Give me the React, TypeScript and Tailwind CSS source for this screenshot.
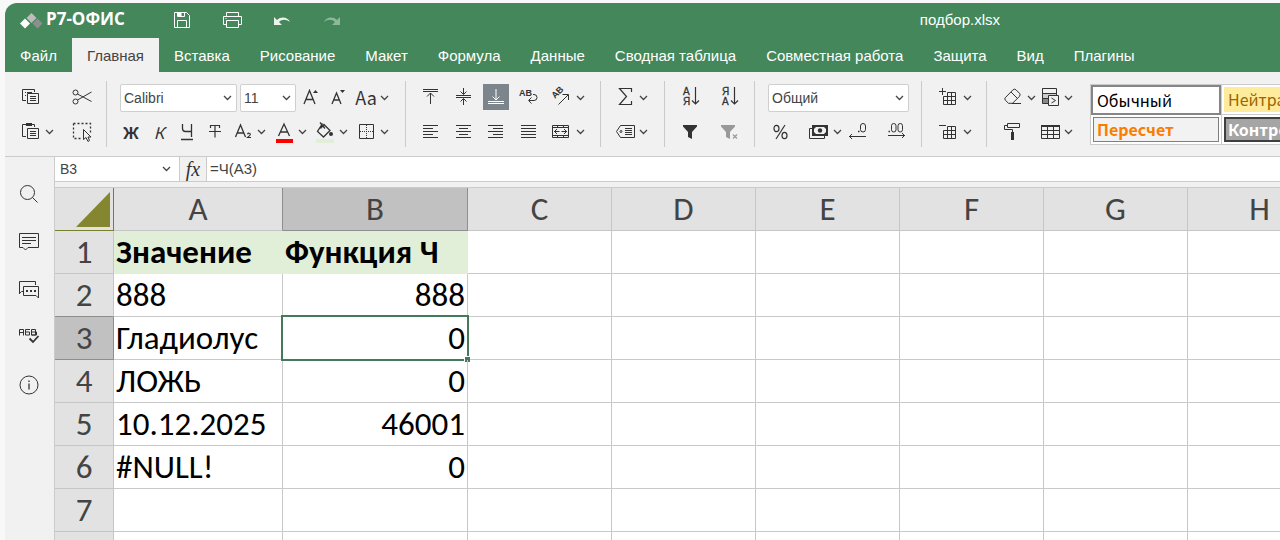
import type { ReactNode } from 'react';

const tabs = [
    'Файл',
    'Главная',
    'Вставка',
    'Рисование',
    'Макет',
    'Формула',
    'Данные',
    'Сводная таблица',
    'Совместная работа',
    'Защита',
    'Вид',
    'Плагины',
];

const columns = ['A', 'B', 'C', 'D', 'E', 'F', 'G', 'H'];

const rows = [
    ['Значение', 'Функция Ч'],
    ['888', '888'],
    ['Гладиолус', '0'],
    ['ЛОЖЬ', '0'],
    ['10.12.2025', '46001'],
    ['#NULL!', '0'],
    ['', ''],
    ['', ''],
];

function Icon({ children, size = 20 }: { children: ReactNode; size?: number }) {
    return (
        <svg
            width={size}
            height={size}
            viewBox={`0 0 ${size} ${size}`}
            fill="none"
            stroke="currentColor"
            className="shrink-0 overflow-visible"
            aria-hidden="true"
        >
            {children}
        </svg>
    );
}

function Chevron() {
    return (
        <svg width="9" height="6" viewBox="0 0 9 6" fill="none" stroke="#444" strokeWidth="1.3" className="shrink-0" aria-hidden="true">
            <path d="M1 1l3.5 3.5L8 1" />
        </svg>
    );
}

function Tool({ label, children }: { label: string; children: ReactNode }) {
    return (
        <button type="button" aria-label={label} className="flex h-7 w-7 shrink-0 items-center justify-center">
            {children}
        </button>
    );
}

function Caret({ label, tight }: { label: string; tight?: boolean }) {
    return (
        <button
            type="button"
            aria-label={label}
            className={tight ? 'flex h-7 w-[9px] shrink-0 items-center' : 'flex h-7 w-[13px] shrink-0 items-center'}
        >
            <Chevron />
        </button>
    );
}

function Select({ label, value, width }: { label: string; value: string; width: string }) {
    return (
        <div className={`grid h-7 shrink-0 items-center rounded-xs border border-[#cfcfcf] bg-white ${width}`}>
            <select aria-label={label} className="col-start-1 row-start-1 w-full appearance-none bg-transparent pl-[3px] text-[14px] text-[#444]">
                <option>{value}</option>
            </select>
            <span className="pointer-events-none col-start-1 row-start-1 justify-self-end pr-1">
                <Chevron />
            </span>
        </div>
    );
}

function Group({ className, children }: { className: string; children: ReactNode }) {
    return (
        <div className={`flex shrink-0 flex-col gap-[6px] border-r border-[#cbcbcb] pt-[3px] ${className}`}>{children}</div>
    );
}

function TitleBar() {
    return (
        <div className="flex h-[35px] items-center text-white">
            <div className="flex w-[163px] items-center gap-[3px] pl-[15px]">
                <svg width="23" height="16" viewBox="0 0 23 16" aria-hidden="true">
                    <path d="M11.500 0l5 5-5 5-5-5z" fill="#bdbdbd" />
                    <path d="M5 5.500l5 5-5 5-5-5z" fill="#fff" />
                    <path d="M17.500 5.500l5 5-5 5-5-5z" fill="#8e8e8e" />
                </svg>
                <span className="pb-1 font-['Open_Sans',sans-serif] text-[17px] font-bold">Р7-ОФИС</span>
            </div>
            <div className="flex gap-[22px]">
                <Tool label="Сохранить">
                    <Icon>
                        <path d="M2.500 1.500h12l3 3v12h-15z" />
                        <path d="M5.500 1.500v4h7v-4M5.500 16.500v-7h9v7" />
                        <path d="M6 2h3v3H6z" fill="currentColor" />
                    </Icon>
                </Tool>
                <Tool label="Печать">
                    <Icon>
                        <path d="M4.500 5.500v-4h12v4M4.500 13.500h-3v-8h18v8h-3M4.500 9.500h12v7h-12z" />
                        <path d="M3.500 7.500h1" />
                    </Icon>
                </Tool>
                <Tool label="Отменить">
                    <Icon>
                        <path d="M2 6v8h8l-3-3c3-3 7-3 11 0-2-5-9-6-13-2z" fill="currentColor" stroke="none" opacity=".9" />
                    </Icon>
                </Tool>
                <Tool label="Повторить">
                    <Icon>
                        <path d="M18 6v8h-8l3-3c-3-3-7-3-11 0 2-5 9-6 13-2z" fill="currentColor" stroke="none" opacity=".4" />
                    </Icon>
                </Tool>
            </div>
            <span className="mr-[280px] ml-auto text-[15px]">подбор.xlsx</span>
        </div>
    );
}

function ClipboardGroup() {
    return (
        <Group className="w-[102px] pl-3">
            <div className="flex gap-[23px]">
                <Tool label="Копировать">
                    <Icon>
                        <path d="M5 12.500H1.500v-11h12V4M4 4.500h1M4 7.500h1M6 4.500h5" />
                        <path d="M6.500 5.500h11v10h-11zM9 8.500h6M9 10.500h6M9 12.500h6" />
                    </Icon>
                </Tool>
                <Tool label="Вырезать">
                    <Icon>
                        <circle cx="3.500" cy="4.500" r="2.500" />
                        <circle cx="3.500" cy="13.500" r="2.500" />
                        <path d="M5.500 6l14 7.500M5.500 12L19.500 4" />
                    </Icon>
                </Tool>
            </div>
            <div className="flex">
                <Tool label="Вставить">
                    <Icon>
                        <path d="M5 14.500H1.500v-12h12V5" />
                        <path d="M5 1h6v3H5z" fill="currentColor" stroke="none" />
                        <path d="M6.500 6.500h11v10h-11zM9 9.500h6M9 11.500h6M9 13.500h6" />
                    </Icon>
                </Tool>
                <Caret label="Параметры вставки" />
                <div className="w-[10px]" />
                <Tool label="Выделить всё">
                    <Icon>
                        <path d="M1.500 1.500h17v9M1.500 1.500v15h9" strokeDasharray="2 2" strokeWidth="1.3" />
                        <path d="M11.500 7.500v10l2.500-2 2 4 1.500-1-1.500-3.500h3z" fill="#f1f1f1" />
                    </Icon>
                </Tool>
            </div>
        </Group>
    );
}

function FontGroup() {
    return (
        <Group className="w-[299px]">
            <div className="flex pl-[13px]">
                <Select label="Шрифт" value="Calibri" width="w-[117px]" />
                <div className="w-[3px]" />
                <Select label="Размер шрифта" value="11" width="w-14" />
                <Tool label="Увеличить размер шрифта">
                    <Icon>
                        <path d="M4 16L9.500 2.500 15 16M6 11.500h7" strokeWidth="1.3" />
                        <path d="M13 5l2.500-3L18 5z" fill="currentColor" stroke="none" />
                    </Icon>
                </Tool>
                <Tool label="Уменьшить размер шрифта">
                    <Icon>
                        <path d="M4 16L8.500 5 13 16M5.500 12h6" strokeWidth="1.3" />
                        <path d="M12 2l2.500 3L17 2z" fill="currentColor" stroke="none" />
                    </Icon>
                </Tool>
                <Tool label="Изменить регистр">
                    <span className="pb-px font-['Noto_Sans_CJK_SC',sans-serif] text-[18px]">Aa</span>
                </Tool>
                <Caret label="Варианты регистра" />
            </div>
            <div className="flex pl-[10px] font-['Noto_Sans_CJK_SC',sans-serif] text-[16px]">
                <Tool label="Полужирный">
                    <b>Ж</b>
                </Tool>
                <Tool label="Курсив">
                    <i>К</i>
                </Tool>
                <Tool label="Подчёркнутый">
                    <Icon>
                        <path d="M5.500 2v4.500q0 3 3 3h6M14.500 2v13M4 17.500h12" strokeWidth="1.3" />
                    </Icon>
                </Tool>
                <Tool label="Зачёркнутый">
                    <Icon>
                        <path d="M5.500 6V3.500h9V6M10 3.500v12M4 9.500h12" strokeWidth="1.200" />
                    </Icon>
                </Tool>
                <Tool label="Подстрочные знаки">
                    <Icon>
                        <path d="M2.500 15L7.500 3l5 12M4.500 11h6.500" strokeWidth="1.3" />
                        <path d="M14.500 12.200c.5-1.500 3-1.200 2.800.3-.2 1-1.800 2-2.800 3h3.500" strokeWidth="1.200" />
                    </Icon>
                </Tool>
                <Caret label="Варианты индексов" />
                <Tool label="Цвет шрифта">
                    <Icon>
                        <path d="M4.500 14L10 2l5.500 12M6.500 10h7" strokeWidth="1.3" />
                        <path d="M2 17h17v4H2z" fill="#f00" stroke="none" />
                    </Icon>
                </Tool>
                <Caret label="Выбрать цвет шрифта" />
                <Tool label="Цвет заливки">
                    <Icon>
                        <path d="M7.500 1.500l-5 8 6 5.500 6.500-6.500-6-6-3.500 4M5 .5l5 6" strokeWidth="1.3" />
                        <circle cx="16" cy="12" r="2" fill="currentColor" stroke="none" />
                        <path d="M1 17h18v4H1z" fill="#e1efd8" stroke="none" />
                    </Icon>
                </Tool>
                <Caret label="Выбрать цвет заливки" />
                <Tool label="Границы">
                    <Icon>
                        <path d="M3.500 2.500h14v14h-14z" />
                        <path d="M10.500 3v13M4 9.500h13" strokeDasharray="1 1" />
                    </Icon>
                </Tool>
                <Caret label="Выбрать границы" />
            </div>
        </Group>
    );
}

function AlignGroup() {
    return (
        <Group className="w-[195px] pl-[10px]">
            <div className="flex gap-[5px]">
                <Tool label="По верхнему краю">
                    <Icon>
                        <path d="M3 1.500h15M3 3.500h15M10.500 16V5M7 8.500L10.500 5 14 8.500" />
                    </Icon>
                </Tool>
                <Tool label="По середине">
                    <Icon>
                        <path d="M3 7.500h15M3 9.500h15M10.500 0v6M7.500 3.500l3 3 3-3M10.500 17v-6M7.500 13.500l3-3 3 3" />
                    </Icon>
                </Tool>
                <button
                    type="button"
                    aria-label="По нижнему краю"
                    aria-pressed="true"
                    className="mx-px flex h-[26px] w-[26px] items-center justify-center bg-[#7d858c] text-white"
                >
                    <Icon>
                        <path d="M2 14.500h16M2 16.500h16M10 2v11M6.500 9.500L10 13l3.500-3.500" />
                    </Icon>
                </button>
                <Tool label="Перенос текста">
                    <Icon>
                        <path d="M10 12.500h5a3 3 0 0 0 0-6h-1M12.500 9.500l-3 3 3 3" />
                        <text x="0" y="8" fontSize="9" fontWeight="700" fill="currentColor" stroke="none">
                            AB
                        </text>
                    </Icon>
                </Tool>
                <div className="flex">
                    <Tool label="Ориентация">
                        <Icon>
                            <path d="M6.500 16.500L16 7M10.500 6.500H16.500V12" />
                            <text fontSize="9" fontWeight="700" fill="currentColor" stroke="none" transform="translate(3 11) rotate(-45)">
                                AB
                            </text>
                        </Icon>
                    </Tool>
                    <Caret label="Варианты ориентации" />
                </div>
            </div>
            <div className="flex gap-[5px]">
                <Tool label="По левому краю">
                    <Icon>
                        <path d="M3 3.500h15M3 6.500h10M3 9.500h15M3 12.500h10M3 15.500h15" />
                    </Icon>
                </Tool>
                <Tool label="По центру">
                    <Icon>
                        <path d="M3 3.500h15M6 6.500h9M3 9.500h15M6 12.500h9M3 15.500h15" />
                    </Icon>
                </Tool>
                <Tool label="По правому краю">
                    <Icon>
                        <path d="M2 3.500h15M7 6.500h10M2 9.500h15M7 12.500h10M2 15.500h15" />
                    </Icon>
                </Tool>
                <Tool label="По ширине">
                    <Icon>
                        <path d="M2 3.500h15M2 6.500h15M2 9.500h15M2 12.500h15M2 15.500h15" />
                    </Icon>
                </Tool>
                <div className="flex">
                    <Tool label="Объединить ячейки">
                        <Icon>
                            <path d="M.5 3.500h16v12H.5zM1 5.500h15M1 13.500h15M5.500 4v1M11.500 4v1M5.500 14v1M11.500 14v1" />
                            <path d="M2 9.500h5.500M5 7l-2.500 2.500L5 12M15 9.500H9.500M12 7l2.500 2.500L12 12" />
                        </Icon>
                    </Tool>
                    <Caret label="Варианты объединения" />
                </div>
            </div>
        </Group>
    );
}

function FormulaGroup() {
    return (
        <Group className="w-16 pl-[10px]">
            <div className="flex">
                <Tool label="Сумма">
                    <Icon>
                        <path d="M16.500 4V.5h-12l7 8-7 8h12V13" strokeWidth="1.200" />
                    </Icon>
                </Tool>
                <Caret label="Другие функции" />
            </div>
            <div className="flex">
                <Tool label="Именованные диапазоны">
                    <Icon>
                        <path d="M5.500 3.500h14v12h-14L1.500 9.500z" />
                        <path d="M10 6.500h7M10 8.500h7M10 10.500h7M10 12.500h7" />
                        <circle cx="6" cy="9.500" r="1" />
                    </Icon>
                </Tool>
                <Caret label="Диспетчер имён" />
            </div>
        </Group>
    );
}

function SortGroup() {
    return (
        <Group className="w-[90px] pl-[11px]">
            <div className="flex gap-3">
                <Tool label="Сортировка по возрастанию">
                    <Icon>
                        <text x="3" y="7" fontSize="10" fill="currentColor" strokeWidth=".3">А</text>
                        <text x="3" y="17" fontSize="10" fill="currentColor" strokeWidth=".3">Я</text>
                        <path d="M15.500-1v17M12 12.500l3.500 3.500 3.500-3.500" strokeWidth="1.200" />
                    </Icon>
                </Tool>
                <Tool label="Сортировка по убыванию">
                    <Icon>
                        <text x="2" y="7" fontSize="10" fill="currentColor" strokeWidth=".3">Я</text>
                        <text x="2" y="17" fontSize="10" fill="currentColor" strokeWidth=".3">А</text>
                        <path d="M14.500-1v17M11 12.500l3.500 3.500 3.500-3.500" strokeWidth="1.200" />
                    </Icon>
                </Tool>
            </div>
            <div className="flex gap-3">
                <Tool label="Фильтр">
                    <Icon>
                        <path d="M3 3h14v1.500l-5 5.500v7l-4-2v-5L3 4.500z" fill="currentColor" stroke="none" />
                    </Icon>
                </Tool>
                <Tool label="Очистить фильтр">
                    <Icon>
                        <path d="M1 3h14v1.500L10 10v7l-4-2v-5L1 4.500z" fill="#999" stroke="none" />
                        <path d="M13 12.500l4 4M17 12.500l-4 4" stroke="#999" strokeWidth="1.200" />
                    </Icon>
                </Tool>
            </div>
        </Group>
    );
}

function NumberGroup() {
    return (
        <Group className="w-[167px]">
            <div className="flex pl-[13px]">
                <Select label="Числовой формат" value="Общий" width="w-[141px]" />
            </div>
            <div className="flex pl-[11px]">
                <Tool label="Процентный формат">
                    <Icon>
                        <ellipse cx="6.500" cy="6.500" rx="2.500" ry="3.200" strokeWidth="1.200" />
                        <ellipse cx="14.500" cy="13.500" rx="2.500" ry="3.200" strokeWidth="1.200" />
                        <path d="M15 3L6 17" strokeWidth="1.200" />
                    </Icon>
                </Tool>
                <div className="w-[11px]" />
                <Tool label="Финансовый формат">
                    <Icon>
                        <path d="M3.500 3.500h15v10h-15zM3 6.500H.5v10h15V14" />
                        <path
                            d="M3 3h16v11H3zM7 5L5 7v3l2 2h8l2-2V7l-2-2z"
                            fill="currentColor"
                            fillRule="evenodd"
                            stroke="none"
                        />
                        <circle cx="11" cy="8.500" r="2.200" fill="currentColor" stroke="none" />
                    </Icon>
                </Tool>
                <Caret label="Выбрать валюту" />
                <button type="button" aria-label="Уменьшить разрядность" className="flex h-7 w-6 items-center justify-center">
                    <Icon>
                        <path d="M1 14.500h17M4 12l-2.500 2.500L4 17" />
                        <path d="M10 9.500h1.500" strokeWidth="1.500" />
                        <rect x="12.500" y="1.500" width="5" height="8.500" rx="2.500" />
                    </Icon>
                </button>
                <div className="w-3" />
                <Tool label="Увеличить разрядность">
                    <Icon>
                        <path d="M2 13.500h17M16 11l2.500 2.500L16 16" />
                        <path d="M2.500 9.500H4" strokeWidth="1.500" />
                        <rect x="5.500" y="1.500" width="4.500" height="8.500" rx="2.200" />
                        <rect x="12" y="1.500" width="4.500" height="8.500" rx="2.200" />
                    </Icon>
                </Tool>
            </div>
        </Group>
    );
}

function CellsGroup() {
    return (
        <Group className="w-[65px] pl-[13px]">
            <div className="flex">
                <Tool label="Вставить ячейки">
                    <Icon>
                        <path d="M8.500 4.500h8v12h-12v-8h12M4.500 12.500h12M8.500 4.500v12M12.500 4.500v12M0 3.500h7M3.500 0v7" />
                    </Icon>
                </Tool>
                <Caret label="Варианты вставки ячеек" />
            </div>
            <div className="flex">
                <Tool label="Удалить ячейки">
                    <Icon>
                        <path d="M8.500 4.500h8v12h-12v-8h12M4.500 12.500h12M8.500 4.500v12M12.500 4.500v12M0 3.500h7" />
                    </Icon>
                </Tool>
                <Caret label="Варианты удаления ячеек" />
            </div>
        </Group>
    );
}

function EditGroup() {
    return (
        <div className="flex shrink-0 flex-col gap-[6px] pt-[3px] pl-3">
            <div className="flex">
                <Tool label="Очистить">
                    <Icon>
                        <path d="M2.200 9.800L10 1.800q1.500-1.300 3 0l3.500 3.500q1.300 1.500 0 3l-7 7H5.500l-3.300-3.300q-.8-1 0-2.200zM8 4l6.500 6.500M9 15.500h9" />
                    </Icon>
                </Tool>
                <Caret label="Варианты очистки" tight />
                <Tool label="Условное форматирование">
                    <Icon>
                        <path d="M2.500 5.500h14v5h-14z" fill="#ccc" stroke="none" />
                        <path d="M2.500 10.500h7v5h-7z" fill="#888" stroke="none" />
                        <path d="M2.500.5h14v5h-14zM2.500.5v15h7M2.500 10.500h7M16.500 5v3" />
                        <path d="M8.500 7.500h10v10h-10z" fill="#f1f1f1" />
                        <path d="M11.500 10l4 2.500-4 2.500" />
                    </Icon>
                </Tool>
                <Caret label="Правила форматирования" />
            </div>
            <div className="flex">
                <Tool label="Копировать стиль">
                    <Icon>
                        <path d="M4.500 1.500h12v4h-12zM4.500 3.500h-3v4h8V10" />
                        <path d="M8 10h3v8H8z" fill="currentColor" stroke="none" />
                    </Icon>
                </Tool>
                <div className="w-[9px]" />
                <Tool label="Форматировать как таблицу">
                    <Icon>
                        <path d="M1.500 4.500h18v12h-18zM1 8.500h18M1 12.500h18M7.500 4v12M13.500 4v12" />
                        <path d="M1 3h19v2H1z" fill="currentColor" stroke="none" />
                    </Icon>
                </Tool>
                <Caret label="Шаблоны таблиц" />
            </div>
        </div>
    );
}

function CellStyles() {
    return (
        <div className="mt-[3px] ml-[13px] grid h-[61px] shrink-0 grid-cols-[130px_131px] grid-rows-2 border-t border-l border-[#cbcbcb] bg-white text-left font-['Noto_Sans_CJK_SC',sans-serif] text-[16px]">
            <button type="button" className="flex items-center border-2 border-[#858585] px-1 pb-px text-black">
                Обычный
            </button>
            <div className="border-b border-l border-[#cbcbcb] p-[2px]">
                <button type="button" className="flex h-full w-full items-center bg-[#ffeb9c] px-1 pb-px text-[#9c6500]">
                    Нейтральный
                </button>
            </div>
            <div className="border-b border-[#cbcbcb] p-[2px]">
                <button type="button" className="flex h-full w-full items-center border border-[#7f7f7f] bg-[#f2f2f2] px-[3px] pb-px font-bold text-[#fa7d00]">
                    Пересчет
                </button>
            </div>
            <div className="border-b border-l border-[#cbcbcb] p-[2px]">
                <button type="button" className="flex h-full w-full items-center border-2 border-[#3f3f3f] bg-[#a5a5a5] px-[2px] pb-px font-bold text-white">
                    Контрольная
                </button>
            </div>
        </div>
    );
}

function Sidebar() {
    return (
        <nav className="flex w-[49px] shrink-0 flex-col items-center gap-5 pt-[23px] pr-px text-[#333]">
            <Tool label="Поиск">
                <Icon>
                    <circle cx="8.500" cy="8.500" r="7" />
                    <path d="M13.500 13.500l5 5" />
                </Icon>
            </Tool>
            <Tool label="Комментарии">
                <Icon>
                    <path d="M.5 1.500h19v14H9L6.500 18 4 15.500H.5zM3 5.500h14M3 8.500h14M3 11.500h9" />
                </Icon>
            </Tool>
            <Tool label="Чат">
                <Icon>
                    <path d="M.5 14V1.500h16V5M.5 13.500l2-2H4" />
                    <path d="M4.500 6.500h15V18L17 15.500H4.500z" />
                    <path d="M7 10h2v2H7zM11 10h2v2h-2zM15 10h2v2h-2z" fill="currentColor" stroke="none" />
                </Icon>
            </Tool>
            <Tool label="Проверка орфографии">
                <Icon>
                    <path d="M.5 7.500V1.500h4v6M.5 4.500h4M11 1.500H6.500v5.500h4v-3h-4M12.500 1.500h4v5.500h-4zM12.500 4h5v3h-5" />
                    <path d="M10.500 10.500l3.500 3.500L19.500 8" strokeWidth="1.800" />
                </Icon>
            </Tool>
            <Tool label="О программе">
                <Icon>
                    <circle cx="10" cy="9" r="9" />
                    <path d="M10 7.500v6M10 4.500V6" strokeWidth="1.3" />
                </Icon>
            </Tool>
        </nav>
    );
}

function FormulaBar() {
    return (
        <div className="flex h-[25px] border-b border-[#cbcbcb] bg-white text-[#444]">
            <div className="flex w-[125px] shrink-0 items-center border-r border-[#cbcbcb] pr-2">
                <input aria-label="Имя ячейки" defaultValue="B3" className="w-full min-w-0 pl-[5px] text-[14px] outline-none" />
                <Chevron />
            </div>
            <button
                type="button"
                aria-label="Вставить функцию"
                className="w-[27px] shrink-0 border-r border-[#cbcbcb] bg-[#f1f1f1] font-['Liberation_Serif',serif] text-[20px] leading-5 text-[#333] italic"
            >
                fx
            </button>
            <input aria-label="Строка формул" defaultValue="=Ч(A3)" className="min-w-0 flex-1 pl-[3px] text-[15px] outline-none" />
        </div>
    );
}

function columnHeadClass(column: string) {
    if (column === 'B') return 'border-r border-b border-[#8e8e8e] bg-[#c1c1c1] p-0 font-normal';
    if (column === 'A') return 'border-r border-b border-r-[#8e8e8e] border-b-[#c6c6c6] bg-[#e2e2e2] p-0 font-normal';
    return 'border-r border-b border-[#c6c6c6] bg-[#e2e2e2] p-0 font-normal';
}

function rowHeadClass(row: number) {
    if (row === 3) return 'border-r border-b border-[#8e8e8e] bg-[#c1c1c1] p-0 font-normal text-[#444]';
    if (row === 2) return 'border-r border-b border-r-[#c6c6c6] border-b-[#8e8e8e] bg-[#e2e2e2] p-0 font-normal text-[#444]';
    return 'border-r border-b border-[#c6c6c6] bg-[#e2e2e2] p-0 font-normal text-[#444]';
}

function cellClass(row: number, column: string) {
    if (row === 1 && (column === 'A' || column === 'B')) {
        return 'border-r border-b border-[#e1efd8] bg-[#e1efd8] px-[2px] py-0 text-left font-bold';
    }
    if (column === 'B') return 'relative border-r border-b border-[#c9c9c9] px-[2px] py-0 text-right';
    return 'border-r border-b border-[#c9c9c9] px-[2px] py-0 text-left';
}

function Sheet() {
    return (
        <div className="mt-[5px] overflow-hidden border-t border-[#cbcbcb] bg-white">
            <table className="w-[1277px] table-fixed border-separate border-spacing-0 font-['Carlito','Lato',sans-serif] text-[33px] leading-[42px] text-black">
                <colgroup>
                    <col className="w-[59px]" />
                    <col className="w-[169px]" />
                    <col className="w-[185px]" />
                    {columns.slice(2).map((column) => (
                        <col key={column} className="w-36" />
                    ))}
                </colgroup>
                <thead>
                    <tr className="text-[#444]">
                        <td className="border-r border-b border-[#77802a] bg-[#e2e2e2] p-0">
                            <svg width="34" height="35" viewBox="0 0 34 35" className="ml-auto mr-[3px]" aria-hidden="true">
                                <path d="M34 0v35H0z" fill="#848730" />
                            </svg>
                        </td>
                        {columns.map((column) => (
                            <th key={column} scope="col" className={columnHeadClass(column)}>
                                {column}
                            </th>
                        ))}
                    </tr>
                </thead>
                <tbody>
                    {rows.map((cells, index) => (
                        <tr key={index} className="h-[43px]">
                            <th scope="row" className={rowHeadClass(index + 1)}>
                                {index + 1}
                            </th>
                            {columns.map((column, c) => (
                                <td key={column} className={cellClass(index + 1, column)}>
                                    {cells[c]}
                                    {index === 2 && column === 'B' && (
                                        <div className="absolute -inset-[2px] border-2 border-[#437a59]">
                                            <span className="absolute -right-[3px] -bottom-[3px] h-[6px] w-[6px] border-t border-l border-white bg-[#437a59]" />
                                        </div>
                                    )}
                                </td>
                            ))}
                        </tr>
                    ))}
                </tbody>
            </table>
        </div>
    );
}

export default function App() {
    return (
        <div className="h-screen overflow-hidden bg-[#f8f8f8] pt-[3px] pl-[5px] font-['Liberation_Sans',sans-serif]">
            <div className="flex h-full flex-col overflow-hidden rounded-tl-xl bg-[#f1f1f1]">
                <header className="shrink-0 bg-[#43875b]">
                    <TitleBar />
                    <div role="tablist" className="flex h-[34px] text-[15px] text-white">
                        {tabs.map((tab) => (
                            <button
                                key={tab}
                                type="button"
                                role="tab"
                                aria-selected={tab === 'Главная'}
                                className={tab === 'Главная' ? 'shrink-0 bg-[#f1f1f1] px-[15px] pt-[2px] text-[#444]' : 'shrink-0 px-[15px] pt-[2px]'}
                            >
                                {tab}
                            </button>
                        ))}
                    </div>
                </header>
                <div className="flex h-[85px] shrink-0 overflow-hidden border-b border-[#cbcbcb] pt-[9px] pb-[9px] text-[#333]">
                    <ClipboardGroup />
                    <FontGroup />
                    <AlignGroup />
                    <FormulaGroup />
                    <SortGroup />
                    <NumberGroup />
                    <CellsGroup />
                    <EditGroup />
                    <CellStyles />
                </div>
                <div className="flex min-h-0 flex-1">
                    <Sidebar />
                    <main className="min-w-0 flex-1 border-l border-[#cbcbcb]">
                        <FormulaBar />
                        <Sheet />
                    </main>
                </div>
            </div>
        </div>
    );
}
